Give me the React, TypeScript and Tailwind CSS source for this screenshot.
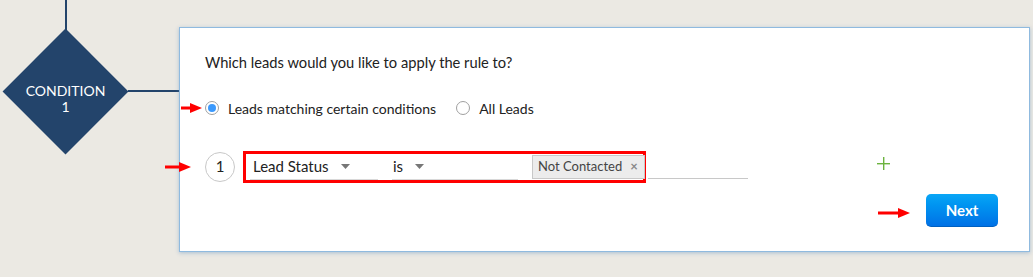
import React from 'react';

const font = { fontFamily: 'Lato, "Open Sans", Arial, sans-serif' };

const RedArrow: React.FC<{ className: string; width: number }> = ({ className, width }) => (
  <svg className={`absolute ${className}`} width={width} height="10" viewBox={`0 0 ${width} 10`}>
    <line x1="0" y1="5" x2={width - 10} y2="5" stroke="#ff0000" strokeWidth="3" />
    <polygon points={`${width - 12},0 ${width},5 ${width - 12},10`} fill="#ff0000" />
  </svg>
);

const Caret = () => (
  <svg width="9" height="5" viewBox="0 0 9 5" className="ml-3">
    <polygon points="0,0 9,0 4.5,5" fill="#777" />
  </svg>
);

const Radio: React.FC<{ checked?: boolean; label: string }> = ({ checked, label }) => (
  <label className="flex items-center gap-[9px]">
    <span className="flex h-[14px] w-[14px] items-center justify-center rounded-full border border-[#a0a0a0] bg-white">
      {checked && <span className="h-[8px] w-[8px] rounded-full bg-[#3b99fc]" />}
    </span>
    <span>{label}</span>
  </label>
);

export default function App() {
  return (
    <div className="relative flex h-[277px] w-[1033px] bg-[#ebe9e3] text-[#222]" style={font}>
      {/* flow diagram */}
      <div className="relative w-[179px] shrink-0">
        <div className="absolute left-[65px] top-0 h-[30px] w-[2px] bg-[#23446b]" />
        <div className="absolute left-[128px] top-[90px] h-[2px] w-[52px] bg-[#23446b]" />
        <div className="absolute left-[21px] top-[47px] h-[89px] w-[89px] rotate-45 bg-[#23446b]" />
        <div className="absolute left-[3px] top-[83px] w-[125px] text-center text-[14px] leading-[16px] text-white">
          CONDITION
          <br />1
        </div>
      </div>

      {/* rule card */}
      <div className="relative mt-[27px] h-[225px] w-[851px] border border-[#8fbadf] bg-white pl-[25px] pr-[31px] pt-[24px] text-[14px] shadow-[0_1px_4px_rgba(90,140,190,0.45)]">
        <p className="text-[14.7px] leading-[20px]">Which leads would you like to apply the rule to?</p>

        <div className="mt-[26px] flex h-[20px] items-center gap-[20px] text-[14px]">
          <Radio checked label="Leads matching certain conditions" />
          <Radio label="All Leads" />
        </div>

        <div className="mt-[33px] flex h-[31px] items-center">
          <div className="flex h-[30px] w-[30px] shrink-0 items-center justify-center rounded-full border border-[#c8c8c8] text-[15px]">
            1
          </div>
          <div className="ml-[8px] flex h-[32px] w-[403px] shrink-0 items-center border-[3px] border-[#ff0000] pl-[4px] pr-[1px]">
            <div className="flex h-[26px] w-[128px] shrink-0 items-center border-b border-[#d8d8d8] pl-[3px] text-[15px]">
              Lead Status
              <Caret />
            </div>
            <div className="ml-[14px] flex h-[26px] w-[126px] shrink-0 items-center border-b border-[#d8d8d8] pl-[1px] text-[15px]">
              is
              <Caret />
            </div>
            <div className="ml-[14px] flex h-[24px] shrink-0 items-center gap-[8px] whitespace-nowrap border border-[#c8c8c8] bg-[#ececec] pl-[5px] pr-[6px] text-[13px] text-[#444]">
              Not Contacted
              <span className="text-[13px] font-bold text-[#888]">×</span>
            </div>
          </div>
          <div className="ml-[2px] mt-[23px] h-px w-[100px] shrink-0 bg-[#c8c8c8]" />
          <svg width="13" height="13" viewBox="0 0 13 13" className="ml-[129px] -mt-[6px] shrink-0">
            <rect x="6" y="0" width="1.4" height="13" fill="#6cb33f" />
            <rect x="0" y="6" width="13" height="1.4" fill="#6cb33f" />
          </svg>
        </div>

        <div className="mt-[12px] flex justify-end">
          <button className="h-[33px] w-[72px] rounded-[5px] border-b border-[#0060c0] bg-gradient-to-b from-[#0aa6f6] to-[#0071e6] text-[15px] font-bold text-white">
            Next
          </button>
        </div>
      </div>

      {/* annotation arrows */}
      <RedArrow className="left-[181px] top-[103px]" width={21} />
      <RedArrow className="left-[165px] top-[162px]" width={26} />
      <RedArrow className="left-[878px] top-[208px]" width={32} />
    </div>
  );
}
